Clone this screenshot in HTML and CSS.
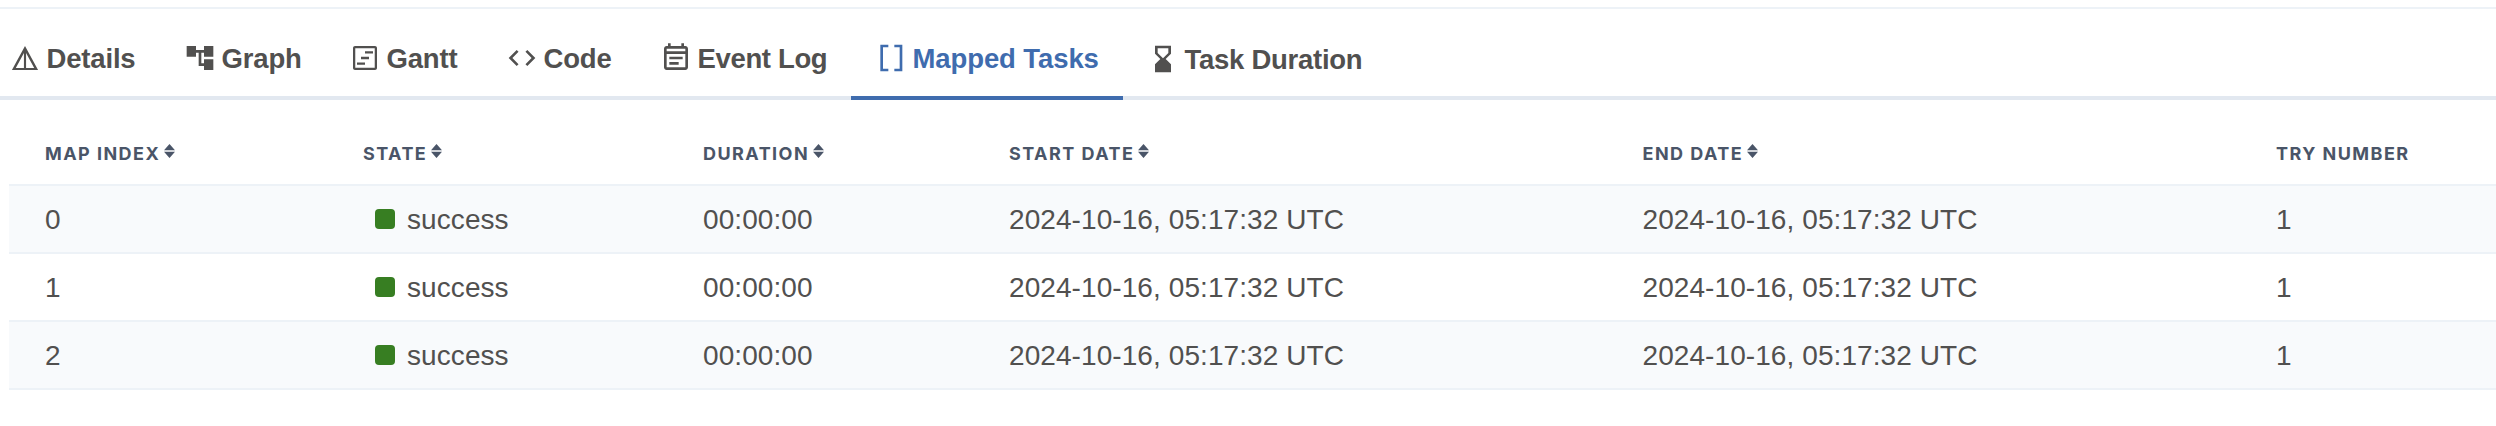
FILE: index.html
```html
<!DOCTYPE html>
<html lang="en">
<head>
<meta charset="utf-8">
<title>Mapped Tasks</title>
<link rel="stylesheet" href="styles.css">
</head>
<body>
<nav class="tabs">
  <a class="tab tab-details"><svg class="icon" viewBox="0 0 24 24"><path d="M12 3 2.200 21h19.600L12 3zm.8 5.200L18.900 19.500H12.800zM11.200 8.200V19.500H5.100z"/></svg><span class="label">Details</span></a>
  <a class="tab tab-graph"><svg class="icon" viewBox="0 0 24 24"><path d="M22 11V3h-7v3H9V3H2v8h7V8h2v10h4v3h7v-8h-7v3h-2V8h2v3z"/></svg><span class="label">Graph</span></a>
  <a class="tab tab-gantt"><svg class="icon" viewBox="0 0 24 24"><path d="M19.500 3h-15C3.700 3 3 3.700 3 4.500v15c0 .8.700 1.500 1.500 1.500h15c.8 0 1.500-.7 1.500-1.500v-15c0-.8-.7-1.500-1.500-1.500zm-.2 16.300H4.700V4.700h14.600v14.600zM12 6.900h6v1.800h-6zM9 11.100h6v1.800H9zM6 15.300h6v1.800H6z"/></svg><span class="label">Gantt</span></a>
  <a class="tab tab-code"><svg class="icon" viewBox="0 0 24 24"><path d="M9.400 16.600 4.800 12l4.600-4.600L8 6l-6 6 6 6 1.400-1.400zm5.200 0 4.600-4.600-4.600-4.600L16 6l6 6-6 6-1.400-1.400z"/></svg><span class="label">Code</span></a>
  <a class="tab tab-event"><svg class="icon" viewBox="0 0 24 24"><path d="M19 3h-1V1h-2v2H8V1H6v2H5c-1.110 0-2 .9-2 2v14c0 1.100.89 2 2 2h14c1.100 0 2-.9 2-2V5c0-1.100-.9-2-2-2zm0 16H5V9h14v10zm0-12H5V5h14v2zM7 11h10v2H7zm0 4h7v2H7z"/></svg><span class="label">Event Log</span></a>
  <a class="tab tab-mapped active"><svg class="icon" viewBox="0 0 24 24"><path d="M14.500 2v1.900h4v16.200h-4V22h6V2zM4 2v20h6v-1.900H6V3.900h4V2z"/></svg><span class="label">Mapped Tasks</span></a>
  <a class="tab tab-duration"><svg class="icon" viewBox="0 0 24 24"><path d="M18 22l-.01-6L14 12l3.990-4.010L18 2H6v6l4 4-4 3.990V22h12zM8 7.500V4h8v3.500l-4 4-4-4z"/></svg><span class="label">Task Duration</span></a>
</nav>
<table class="grid">
  <colgroup><col class="c-index"><col class="c-state"><col class="c-duration"><col class="c-date"><col class="c-date"><col></colgroup>
  <thead>
    <tr>
      <th>Map Index<svg class="sort" viewBox="0 0 11 14"><path d="M0 6.200 5.500 0 11 6.200zM0 7.800h11L5.500 14z"/></svg></th>
      <th>State<svg class="sort" viewBox="0 0 11 14"><path d="M0 6.200 5.500 0 11 6.200zM0 7.800h11L5.500 14z"/></svg></th>
      <th>Duration<svg class="sort" viewBox="0 0 11 14"><path d="M0 6.200 5.500 0 11 6.200zM0 7.800h11L5.500 14z"/></svg></th>
      <th>Start Date<svg class="sort" viewBox="0 0 11 14"><path d="M0 6.200 5.500 0 11 6.200zM0 7.800h11L5.500 14z"/></svg></th>
      <th>End Date<svg class="sort" viewBox="0 0 11 14"><path d="M0 6.200 5.500 0 11 6.200zM0 7.800h11L5.500 14z"/></svg></th>
      <th>Try Number</th>
    </tr>
  </thead>
  <tbody>
    <tr><td>0</td><td><div class="state"><i class="swatch"></i><span>success</span></div></td><td>00:00:00</td><td>2024-10-16, 05:17:32 UTC</td><td>2024-10-16, 05:17:32 UTC</td><td>1</td></tr>
    <tr><td>1</td><td><div class="state"><i class="swatch"></i><span>success</span></div></td><td>00:00:00</td><td>2024-10-16, 05:17:32 UTC</td><td>2024-10-16, 05:17:32 UTC</td><td>1</td></tr>
    <tr><td>2</td><td><div class="state"><i class="swatch"></i><span>success</span></div></td><td>00:00:00</td><td>2024-10-16, 05:17:32 UTC</td><td>2024-10-16, 05:17:32 UTC</td><td>1</td></tr>
  </tbody>
</table>
</body>
</html>
```
FILE: styles.css
```css
* { box-sizing: border-box; }
body {
  margin: 0;
  padding-top: 7px;
  background: #fff;
  color: #51504f;
  font-family: "Liberation Sans", Arial, sans-serif;
  font-size: 28px;
  overflow: hidden;
}
.tabs {
  display: flex;
  height: 93px;
  border-top: 2px solid #edf2f7;
  box-shadow: inset 0 -4px #e2e8f0;
}
.tab {
  display: flex;
  align-items: center;
  flex: none;
  padding-top: 11px;
  font-weight: 700;
  font-size: 27.5px;
  letter-spacing: -0.17px;
  white-space: nowrap;
  border-bottom: 4px solid transparent;
}
.icon { width: 32px; height: 32px; margin-right: 5.5px; fill: currentColor; flex: none; }
.label { padding-top: 2px; line-height: 36px; }
.tab-details { width: 171px; padding-left: 9px; }
.tab-graph { width: 166px; padding-left: 13px; }
.tab-gantt { width: 158px; padding-left: 12px; }
.tab-code { width: 154px; padding-left: 11px; }
.tab-event { width: 202px; padding-left: 11px; letter-spacing: -0.35px; }
.tab-mapped { width: 272px; padding-left: 24px; letter-spacing: -0.1px; }
.tab-duration { padding-left: 24px; padding-top: 13px; letter-spacing: -0.27px; }
.active { color: #3f6cae; border-bottom-color: #3f6cae; }

.grid {
  width: 2487px;
  margin-left: 9px;
  table-layout: fixed;
  border-collapse: separate;
  border-spacing: 0;
}
.c-index { width: 318px; }
.c-state { width: 340px; }
.c-duration { width: 306px; }
.c-date { width: 633.500px; }
th, td { padding: 0 0 0 36px; text-align: left; white-space: nowrap; border-bottom: 2px solid #edf2f7; }
th {
  height: 86px;
  padding-top: 24px;
  font: 700 18px/24px Inter, sans-serif;
  letter-spacing: 1.45px;
  text-transform: uppercase;
  color: #4a5568;
}
td { height: 68px; padding-top: 2px; line-height: 36px; letter-spacing: 0.08px; }
tbody tr:nth-child(odd) { background: #f8fafc; }
.sort { width: 11px; height: 14px; margin-left: 3.5px; vertical-align: 2px; fill: currentColor; }
.state { display: flex; align-items: center; padding-left: 12px; }
.swatch { width: 20px; height: 20px; margin: -2px 12px 0 0; border-radius: 4px; background: #377e22; }
```
